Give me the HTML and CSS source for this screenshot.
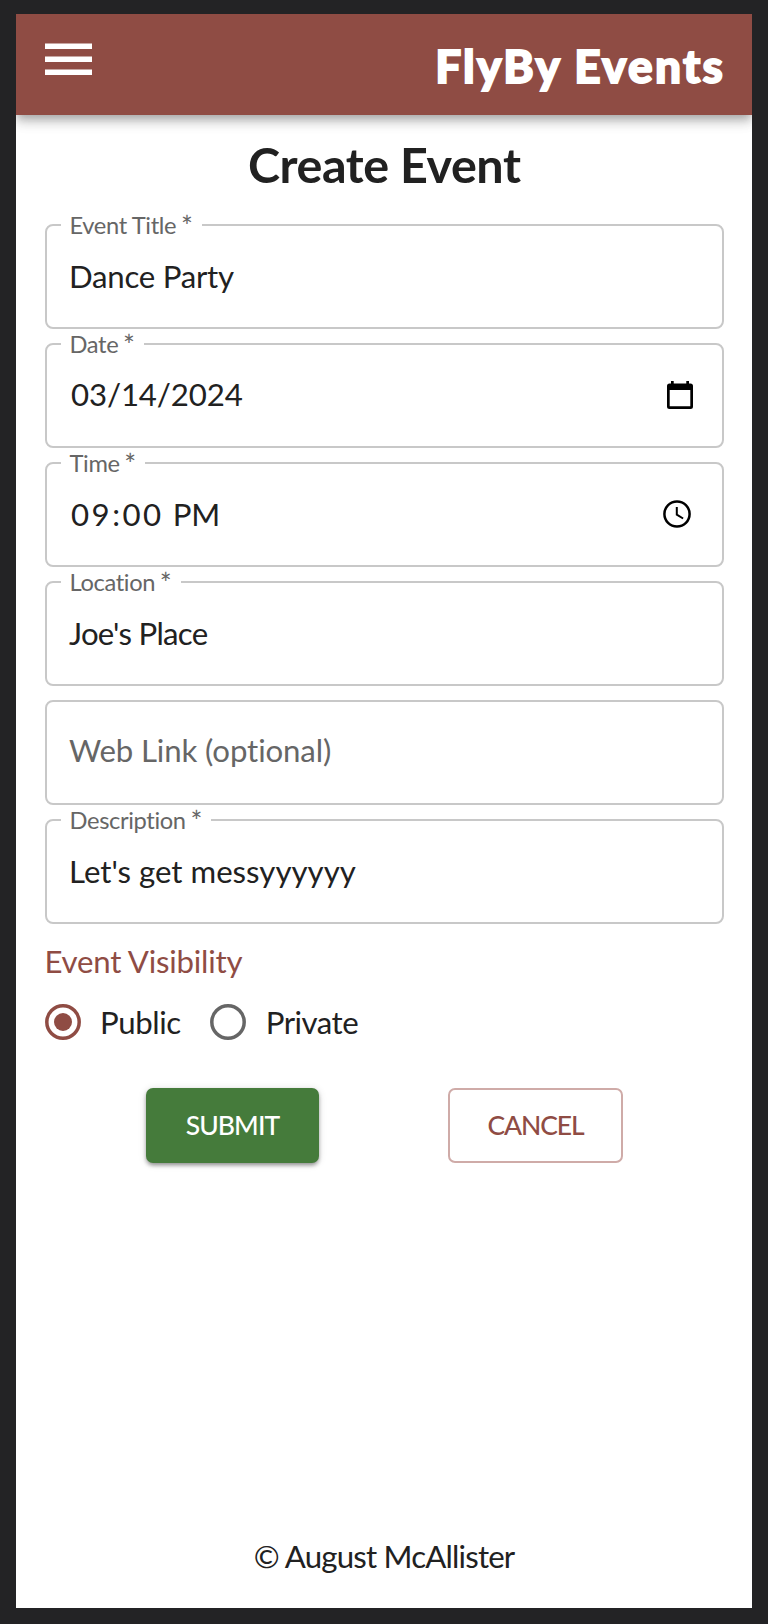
FILE: index.html
```
<!DOCTYPE html>
<html lang="en">
<head>
<meta charset="utf-8">
<title>FlyBy Events</title>
<link rel="stylesheet" href="styles.css">
</head>
<body>
<div class="app">
  <header class="bar">
    <svg class="menu" viewBox="0 0 47 32" aria-label="Menu"><path d="M0 .4h47V6H0zM0 13.400h47V19H0zM0 26.400h47V32H0z" fill="#fff"/></svg>
    <span class="brand">FlyBy Events</span>
  </header>
  <main class="main">
    <h1 class="title">Create Event</h1>
    <form class="form">
      <div class="field"><span class="label">Event Title <sup>*</sup></span><span class="value dance">Dance Party</span></div>
      <div class="field"><span class="label">Date <sup>*</sup></span><span class="value date">03/14/2024</span>
        <svg class="cal" viewBox="0 0 26 28"><path d="M4 0h2.700v2.500h12.600V0H22v2.500h1.500A2.500 2.500 0 0 1 26 5v20.500a2.500 2.500 0 0 1-2.500 2.500h-21A2.500 2.500 0 0 1 0 25.500V5a2.500 2.500 0 0 1 2.500-2.500H4zM2.700 9v16.300h20.600V9z" fill="#000" fill-rule="evenodd"/></svg></div>
      <div class="field"><span class="label">Time <sup>*</sup></span><span class="value time"><span class="digits">09:00</span> PM</span>
        <svg class="clock" viewBox="0 0 28 28"><circle cx="14" cy="14" r="12.600" fill="none" stroke="#000" stroke-width="2.500"/><path d="M13.800 7v7.700l6.300 3.800" fill="none" stroke="#000" stroke-width="2"/></svg></div>
      <div class="field"><span class="label">Location <sup>*</sup></span><span class="value place">Joe's Place</span></div>
      <div class="field"><span class="value web">Web Link (optional)</span></div>
      <div class="field"><span class="label">Description <sup>*</sup></span><span class="value">Let's get messyyyyyy</span></div>
      <div class="legend">Event Visibility</div>
      <div class="radios">
        <span class="option public"><svg class="radio" viewBox="0 0 36 36"><circle cx="18" cy="18" r="16.200" fill="none" stroke="#8f4c44" stroke-width="3.500"/><circle cx="18" cy="18" r="9" fill="#8f4c44"/></svg>Public</span>
        <span class="option private"><svg class="radio" viewBox="0 0 36 36"><circle cx="18" cy="18" r="16.200" fill="none" stroke="#666" stroke-width="3.500"/></svg>Private</span>
      </div>
      <div class="actions">
        <button type="button" class="btn submit">SUBMIT</button>
        <button type="button" class="btn cancel">CANCEL</button>
      </div>
    </form>
  </main>
  <footer class="footer">© August McAllister</footer>
</div>
</body>
</html>
```
FILE: styles.css
```
* { box-sizing: border-box; }
body {
  margin: 0;
  height: 1624px;
  padding: 14px 16px 16px;
  background: #232325;
  color: #212121;
  font-family: Lato, "Liberation Sans", sans-serif;
  font-size: 31.200px;
  font-variant-ligatures: none;
}
.app { height: 1594px; background: #fff; display: flex; flex-direction: column; overflow: hidden; }
.bar {
  flex: none;
  height: 100.500px;
  padding: 0 28px 0 29px;
  display: flex;
  justify-content: space-between;
  background: #8f4c44;
  box-shadow: 0 4px 8px -2px rgba(0,0,0,.2), 0 8px 10px rgba(0,0,0,.14), 0 2px 18px rgba(0,0,0,.12);
}
.menu { width: 47px; height: 32px; margin-top: 29px; }
.brand {
  margin: 22px -1px 0 0;
  color: #fff;
  font-size: 46px;
  font-weight: 900;
  line-height: 60px;
  letter-spacing: 2.200px;
  -webkit-text-stroke: 1.800px #fff;
  white-space: nowrap;
}
.main { flex: none; padding: 0 28px 0 28.500px; }
.title {
  margin: 22px 0 0;
  height: 87px;
  line-height: 54px;
  font-size: 48.500px;
  font-weight: 700;
  letter-spacing: -.45px;
  text-align: center;
  white-space: nowrap;
}
.form { display: flex; flex-direction: column; }
.field {
  position: relative;
  height: 105px;
  margin-bottom: 14px;
  padding: 0 29px 0 22.500px;
  border: 2px solid #c8c8c8;
  border-radius: 8px;
  display: flex;
  align-items: center;
  justify-content: space-between;
  white-space: nowrap;
}
.label {
  position: absolute;
  left: 14.500px;
  top: -14px;
  padding: 0 9.500px 0 8.500px;
  background: #fff;
  color: #666;
  font-size: 23.700px;
  line-height: 26px;
  letter-spacing: -.36px;
}
.label sup { font-size: 28px; line-height: 0; vertical-align: -3px; margin-left: -1px; }
.dance { letter-spacing: -.25px; }
.date { padding: 0 0 2px 2px; letter-spacing: -.13px; }
.time { padding-left: 2px; }
.digits { letter-spacing: 2.500px; margin-right: 1px; }
.place { letter-spacing: -.72px; }
.web { color: #666; padding-bottom: 4px; letter-spacing: -.12px; }
.cal { width: 26px; height: 28px; }
.clock { width: 28px; height: 28px; margin-right: 2px; }
.legend { margin-top: 3px; color: #8f4c44; line-height: 40px; letter-spacing: -.22px; }
.radios { display: flex; align-items: center; gap: 29.500px; height: 40px; margin-top: 21px; }
.option { display: flex; align-items: center; gap: 19.500px; }
.radio { width: 36px; height: 36px; }
.public { letter-spacing: -.4px; }
.private { letter-spacing: -.5px; }
.actions { display: flex; justify-content: center; gap: 129px; margin: 46px 0 0 .5px; }
.btn {
  height: 75px;
  padding: 0;
  border: 0;
  border-radius: 7px;
  font: 500 26.500px Lato, "Liberation Sans", sans-serif;
}
.submit {
  width: 173px;
  background: #457b3b;
  color: #fff;
  letter-spacing: -.9px;
  box-shadow: 0 3px 4px -1px rgba(0,0,0,.3), 0 2px 4px rgba(0,0,0,.14), 0 1px 8px rgba(0,0,0,.12);
}
.cancel {
  width: 175px;
  background: #fff;
  color: #8f4c44;
  border: 2px solid #cfaba8;
  letter-spacing: -1.100px;
}
.footer { margin-top: auto; height: 72px; text-align: center; line-height: 40px; letter-spacing: -.82px; }
```
